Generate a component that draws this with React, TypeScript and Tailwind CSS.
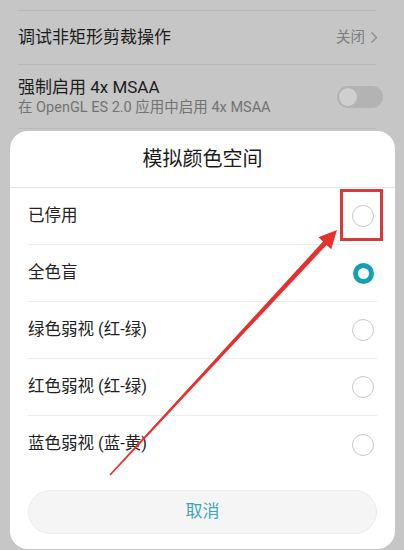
import React from "react";

const font = { fontFamily: "Roboto, 'Noto Sans CJK SC', sans-serif" };

function Radio({ checked }: { checked?: boolean }) {
  return checked ? (
    <div className="w-[21px] h-[21px] rounded-full border-[5px] border-[#14a0b4] box-border" />
  ) : (
    <div className="w-[22px] h-[22px] rounded-full border border-[#c9c9c9] box-border" />
  );
}

const options = [
  { label: "已停用", checked: false },
  { label: "全色盲", checked: true },
  { label: "绿色弱视 (红-绿)", checked: false },
  { label: "红色弱视 (红-绿)", checked: false },
  { label: "蓝色弱视 (蓝-黄)", checked: false },
];

export default function App() {
  return (
    <div
      className="relative w-[404px] h-[550px] overflow-hidden bg-[#c6c6c6]"
      style={font}
    >
      {/* Background settings list (dimmed) */}
      <div className="pt-[10px] px-[18px]">
        <div className="h-px bg-[#b9b9b9] mr-[10px]" />
        <div className="h-[53px] flex items-center justify-between pr-[8px]">
          <span className="text-[17px] text-[#1d1d1d]">调试非矩形剪裁操作</span>
          <span className="text-[14.5px] text-[#7d7d7d] flex items-center gap-[5px]">
            关闭
            <svg width="8" height="13" viewBox="0 0 8 13">
              <path d="M1.5 1.5 L6.5 6.5 L1.5 11.5" fill="none" stroke="#8a8a8a" strokeWidth="1.3" />
            </svg>
          </span>
        </div>
        <div className="h-px bg-[#b9b9b9] mr-[10px]" />
        <div className="h-[63px] flex items-center justify-between pr-[3px]">
          <div className="flex flex-col">
            <span className="text-[17px] leading-[22px] text-[#1d1d1d]">强制启用 4x MSAA</span>
            <span className="text-[14.5px] leading-[20px] text-[#727272]">在 OpenGL ES 2.0 应用中启用 4x MSAA</span>
          </div>
          <div className="w-[46px] h-[22px] rounded-full bg-[#b3b3b3] flex items-center px-[2px]">
            <div className="w-[18px] h-[18px] rounded-full bg-[#cfcfcf]" />
          </div>
        </div>
        <div className="h-px bg-[#b9b9b9] mr-[10px]" />
      </div>

      {/* Dialog */}
      <div className="absolute left-[10px] top-[131px] w-[385px] h-[418px] bg-white rounded-[18px] flex flex-col">
        <div className="h-[56px] flex items-center justify-center text-[20px] text-[#1b1b1b]">
          模拟颜色空间
        </div>
        <div className="h-px bg-[#e2e2e2]" />
        <div className="px-[18px] flex flex-col">
          {options.map((o, i) => (
            <div
              key={o.label}
              className={
                "h-[57px] flex items-center justify-between pr-[3px] " +
                (i < options.length - 1 ? "border-b border-[#ececec]" : "")
              }
            >
              <span className="text-[16.5px] text-[#222]">{o.label}</span>
              <Radio checked={o.checked} />
            </div>
          ))}
        </div>
        <div className="px-[18px] mt-[17px]">
          <div className="h-[44px] rounded-full bg-[#f5f5f5] border border-[#ececec] flex items-center justify-center text-[17px] text-[#3aa5bd]">
            取消
          </div>
        </div>
      </div>

      {/* Annotation: red box */}
      <div className="absolute left-[340px] top-[189px] w-[43px] h-[52px] border-[3px] border-[#d43c3c]" />

      {/* Annotation: arrow */}
      <svg className="absolute left-0 top-0" width="404" height="550" viewBox="0 0 404 550">
        <polygon
          points="110.6,475.5 326.6,244.9 331.2,249.2 337,230 318.4,237.3 323.0,241.5 109.4,474.5"
          fill="#e6302d"
        />
      </svg>
    </div>
  );
}
